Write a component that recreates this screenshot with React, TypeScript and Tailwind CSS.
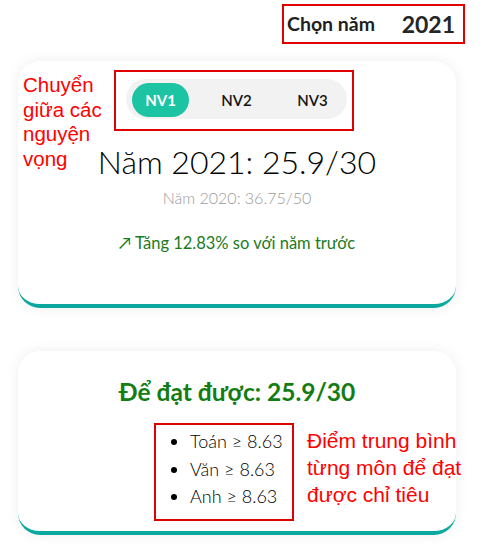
const tabs = ["NV1", "NV2", "NV3"];
const subjects = [
  { name: "Toán", score: "8.63" },
  { name: "Văn", score: "8.63" },
  { name: "Anh", score: "8.63" },
];

const ui = { fontFamily: "Lato, 'Noto Sans', sans-serif" };
const note = { fontFamily: "'Liberation Sans', Arial, sans-serif" };

export default function App() {
  return (
    <div className="relative w-[480px] h-[559px] bg-white text-black" style={ui}>
      <div className="flex justify-end pt-[4px] pr-[15px]">
        <div className="flex items-center w-[183px] h-[40px] border-2 border-[#e00000] pl-[3px]">
          <span className="text-[19.5px] font-bold text-[#1f1f1f]">Chọn năm</span>
          <span className="ml-auto mr-[8px] text-[23px] font-bold text-[#262626]">2021</span>
        </div>
      </div>

      <div className="relative mt-[17px] ml-[18px] w-[438px] h-[247px] rounded-[22px] border-b-4 border-[#0ba89f] bg-white shadow-[0_0_14px_rgba(0,0,0,0.07)]">
        <p className="absolute left-[5px] top-[12px] w-[100px] text-[20.5px] leading-[24.5px] text-[#ff0000]" style={note}>
          Chuyển giữa các nguyện vọng
        </p>
        <div className="flex justify-center pt-[9px]">
          <div className="ml-[-6px] border-2 border-[#e00000] pl-[10px] pr-[5px] pt-[7px] pb-[10px]">
            <div className="flex gap-[19px] rounded-full bg-[#f2f2f2] px-[6px] pt-[4px] pb-[2px]">
              {tabs.map((t, i) => (
                <button
                  key={t}
                  className={
                    i === 0
                      ? "w-[57px] h-[34px] rounded-full bg-[#1dc4a4] text-[15px] font-bold text-white"
                      : "w-[57px] h-[34px] rounded-full text-[15px] font-semibold text-[#111]"
                  }
                >
                  {t}
                </button>
              ))}
            </div>
          </div>
        </div>
        <h1 className="mt-[11px] text-center text-[32px] font-light leading-[40px]">Năm 2021: 25.9/30</h1>
        <p className="mt-[4px] text-center text-[16px] font-light text-[#9a9a9a]">Năm 2020: 36.75/50</p>
        <p className="mt-[21px] text-center text-[16.5px] text-[#1b7a1b]">↗ Tăng 12.83% so với năm trước</p>
      </div>

      <div className="relative mt-[43px] ml-[18px] w-[438px] h-[184px] rounded-[22px] border-b-4 border-[#0ba89f] bg-white shadow-[0_0_14px_rgba(0,0,0,0.07)]">
        <h2 className="pt-[26px] text-center text-[24.5px] font-bold leading-[30px] text-[#137d13]">Để đạt được: 25.9/30</h2>
        <div className="mt-[16px] ml-[136px] flex items-start gap-[13px]">
          <ul className="shrink-0 w-[140px] h-[98px] border-2 border-[#e00000] pl-[34px] pt-[3px] list-disc text-[18px] font-light leading-[27.5px]">
            {subjects.map((s) => (
              <li key={s.name}>
                {s.name} ≥ {s.score}
              </li>
            ))}
          </ul>
          <p className="shrink-0 w-[160px] pt-[4px] text-[21px] leading-[27px] text-[#ff0000]" style={note}>
            Điểm trung bình từng môn để đạt được chỉ tiêu
          </p>
        </div>
      </div>
    </div>
  );
}
